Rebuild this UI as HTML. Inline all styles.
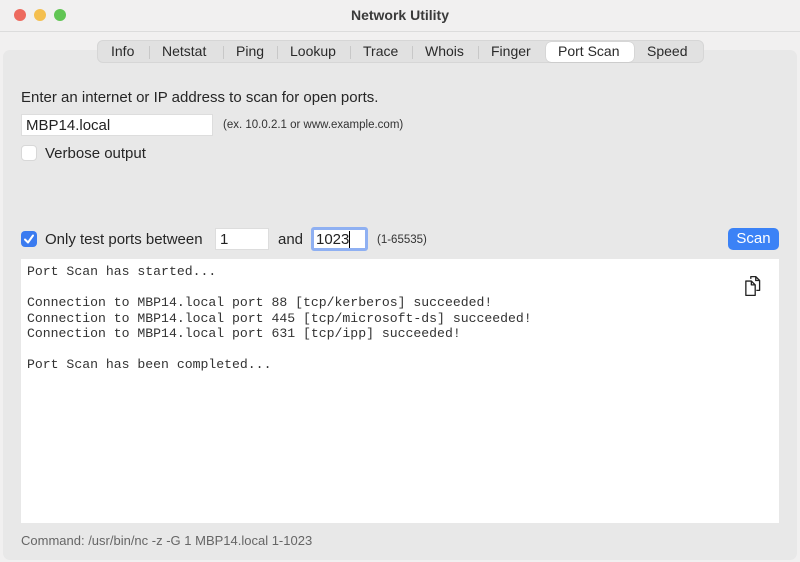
<!DOCTYPE html>
<html><head><meta charset="utf-8"><style>
*{box-sizing:border-box;margin:0;padding:0}
body{width:800px;height:562px;background:#f1f0f0;font-family:"Liberation Sans",sans-serif;color:#222;position:relative;overflow:hidden}
.abs{position:absolute}
.dot{width:12px;height:12px;border-radius:50%;top:9px}
.title{top:7px;left:0;width:800px;text-align:center;font-size:14px;font-weight:bold;color:#3a3a3a}
.tline{top:31px;left:0;width:800px;height:1px;background:#dcdcdc}
.panel{left:3px;top:50px;width:794px;height:510px;background:#e8e8e8;border-radius:7px}
.tabs{left:97px;top:40px;width:607px;height:23px;background:#e1e1e1;border-radius:6px;border:1px solid #d6d6d6;font-size:14px;color:#2a2a2a}
.tab{position:absolute;top:2px}
.sep{position:absolute;top:5px;width:1px;height:13px;background:#c8c8c8}
.sel{position:absolute;left:448px;top:1px;width:88px;height:20px;background:#fff;border-radius:5px;box-shadow:0 0 1px rgba(0,0,0,.3)}
.t14{font-size:15px;color:#262626}
.input{background:#fff;border:1px solid #ddd;font-size:15px;padding-left:4px;line-height:21px}
.out{left:21px;top:259px;width:758px;height:264px;background:#fff}
.mono{font-family:"Liberation Mono",monospace;font-size:13.15px;color:#333;line-height:15.5px;white-space:pre}
</style></head><body>
<div class="abs dot" style="left:14px;background:#ed6a5e"></div>
<div class="abs dot" style="left:34px;background:#f4bf4f"></div>
<div class="abs dot" style="left:54px;background:#61c554"></div>
<div class="abs title">Network Utility</div>
<div class="abs tline"></div>
<div class="abs panel"></div>
<div class="abs tabs">
<div class="sel"></div>
<span class="tab" style="left:13px">Info</span><div class="sep" style="left:51px"></div>
<span class="tab" style="left:64px">Netstat</span><div class="sep" style="left:125px"></div>
<span class="tab" style="left:138px">Ping</span><div class="sep" style="left:179px"></div>
<span class="tab" style="left:192px">Lookup</span><div class="sep" style="left:252px"></div>
<span class="tab" style="left:265px">Trace</span><div class="sep" style="left:314px"></div>
<span class="tab" style="left:327px">Whois</span><div class="sep" style="left:380px"></div>
<span class="tab" style="left:393px">Finger</span>
<span class="tab" style="left:460px">Port Scan</span>
<span class="tab" style="left:549px">Speed</span>
</div>
<div class="abs t14" style="left:21px;top:89px">Enter an internet or IP address to scan for open ports.</div>
<div class="abs input" style="left:21px;top:114px;width:192px;height:22px">MBP14.local</div>
<div class="abs" style="left:223px;top:119px;font-size:11.5px;color:#333">(ex. 10.0.2.1 or www.example.com)</div>
<div class="abs" style="left:21px;top:145px;width:16px;height:16px;background:#fff;border-radius:4px;border:1px solid #d8d8d8"></div>
<div class="abs t14" style="left:45px;top:145px">Verbose output</div>
<div class="abs" style="left:21px;top:231px;width:16px;height:16px;background:#3a7bf0;border-radius:4px"><svg width="16" height="16"><path d="M4 8.5 L7 11.5 L12 4.5" stroke="#fff" stroke-width="2" fill="none" stroke-linecap="round" stroke-linejoin="round"/></svg></div>
<div class="abs t14" style="left:45px;top:231px">Only test ports between</div>
<div class="abs input" style="left:215px;top:228px;width:54px;height:22px">1</div>
<div class="abs t14" style="left:278px;top:231px">and</div>
<div class="abs input" style="left:311px;top:227px;width:57px;height:24px;border:3px solid #8fb0f2;border-radius:3px;padding-left:2px;line-height:19px">1023<span style="border-left:1px solid #000;"></span></div>
<div class="abs" style="left:377px;top:234px;font-size:11.5px;color:#333">(1-65535)</div>
<div class="abs" style="left:728px;top:228px;width:51px;height:22px;background:#3b82f6;border-radius:5px;color:#fff;font-size:15px;text-align:center;line-height:22px">Scan</div>
<div class="abs out">
<div class="abs mono" style="left:6px;top:5px">Port Scan has started...

Connection to MBP14.local port 88 [tcp/kerberos] succeeded!
Connection to MBP14.local port 445 [tcp/microsoft-ds] succeeded!
Connection to MBP14.local port 631 [tcp/ipp] succeeded!

Port Scan has been completed...</div>
<svg class="abs" style="left:722px;top:16px" width="20" height="22" viewBox="0 0 18 20"><path d="M7 3.5 V1.5 H11.5 L15 5 V14 H12" fill="none" stroke="#222" stroke-width="1.2" stroke-linejoin="round"/><path d="M11.5 1.5 V5 H15" fill="none" stroke="#222" stroke-width="1.2"/><path d="M2.5 5.5 H7.5 L11 9 V18.5 H2.5 Z M7.5 5.5 V9 H11" fill="#fff" stroke="#222" stroke-width="1.2" stroke-linejoin="round"/></svg>
</div>
<div class="abs" style="left:21px;top:533px;font-size:13px;color:#666">Command: /usr/bin/nc -z -G 1 MBP14.local 1-1023</div>
</body></html>
